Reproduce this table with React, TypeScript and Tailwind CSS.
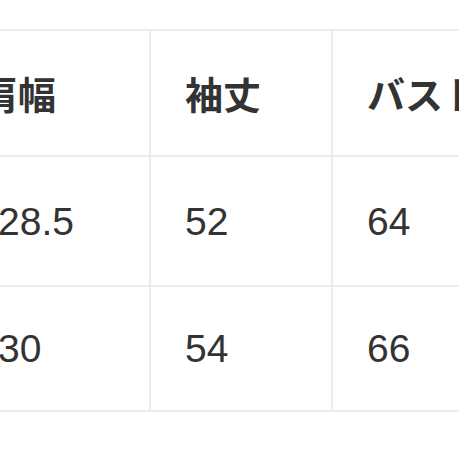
import React from "react";

const headers = ["肩幅", "袖丈", "バスト"];
const rows = [
  ["28.5", "52", "64"],
  ["30", "54", "66"],
];

const App: React.FC = () => {
  return (
    <div className="w-[459px] h-[459px] overflow-hidden bg-white">
      {/* size table, cropped on both sides like the screenshot */}
      <div className="mt-[29px] ml-[-33px] inline-grid grid-cols-[180px_180px_180px] grid-rows-[124px_128px_123px] gap-[2px] p-[2px] bg-[#ececec]">
        {headers.map((h, i) => (
          <div
            key={h}
            className={`bg-white flex items-center text-[38px] font-bold text-[#333333] leading-none ${
              i === 0 ? "pl-[11px]" : "pl-[34px]"
            }`}
            style={{ fontFamily: '"Noto Sans CJK JP", "Noto Sans", sans-serif' }}
          >
            {h}
          </div>
        ))}
        {rows.map((r, ri) =>
          r.map((v, ci) => (
            <div
              key={`${ri}-${ci}`}
              className={`bg-white flex items-center text-[39px] text-[#333333] leading-none ${
                ci === 0 ? "pl-[29px]" : "pl-[34px]"
              }`}
              style={{ fontFamily: '"Liberation Sans", Arial, sans-serif' }}
            >
              {v}
            </div>
          ))
        )}
      </div>
    </div>
  );
};

export default App;
